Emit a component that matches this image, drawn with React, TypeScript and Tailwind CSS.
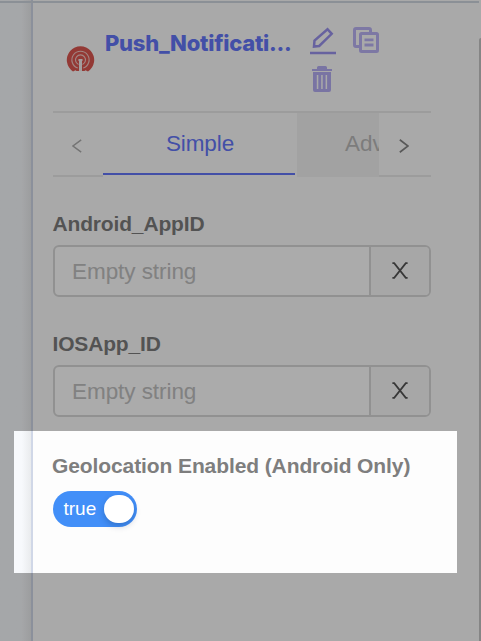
import React from "react";

function StringField({ label }: { label: string }) {
  return (
    <section className="h-[120px]">
      <h2 className="-ml-[0.5px] h-[33px] text-[21px] leading-[24px] font-bold tracking-[-0.16px] text-[#7d7d7d] whitespace-nowrap">{label}</h2>
      <div className="flex h-[52px] w-[378px] rounded-[6px] border-2 border-[#d8d8d8] bg-white">
        <div className="flex w-[314px] items-center pt-[2px] pl-[17px] text-[22.5px] tracking-[-0.06px] text-[#c0c0c0]">Empty string</div>
        <button className="flex flex-1 items-center justify-center rounded-r-[4px] border-l-2 border-[#d8d8d8] bg-[#fafafa]" aria-label="Clear">
          <svg width="16" height="17" viewBox="0 0 16 17" className="-mt-px" fill="none" stroke="#545454" strokeWidth="1.8">
            <path d="M.4 1.2H2.2L13.8 15.8h1.8M15.6 1.2H13.8L2.2 15.8H.4" />
          </svg>
        </button>
      </div>
    </section>
  );
}

export default function App() {
  return (
    <main className="relative flex h-[641px] w-[481px] overflow-hidden bg-[#fdfdfd] font-['Liberation_Sans',Arial,sans-serif]">
      <aside className="w-[31px] shrink-0 bg-linear-to-r from-[#f7f9fc] from-70% to-[#e9ebed]" />
      <div className="w-[2px] shrink-0 bg-[#d0d7e7]" />
      <div className="flex-1 pl-[20px]">
        <header className="flex h-[111px] pt-[25px]">
          <svg className="mt-[21px] ml-[13px] shrink-0" width="29" height="29" viewBox="0 0 29 29" fill="none">
            <path d="M7 25.4A13.7 13.7 0 1 1 22 25.4L19.5 24.2l-1 .8h-8l-1-.8Z" fill="#dc564f" />
            <g stroke="#f0c8c5" strokeWidth="1.1">
              <path d="M11.8 22A8.6 8.6 0 1 1 17.2 22" />
              <path d="M12.5 18.5A5 5 0 1 1 16.5 18.5" />
            </g>
            <path d="M12.5 13h4v2h-.5v10h-3v-10h-.5Z" fill="#f4eeee" />
          </svg>
          <h1 className="ml-[10px] w-[188px] shrink-0 whitespace-nowrap pt-[4px] font-[Inter,sans-serif] text-[22px] leading-[28px] font-extrabold tracking-[-0.25px] text-[#6477fa]">Push_Notificati...</h1>
          <div className="ml-[16px] grid h-[72px] grid-cols-[43px_28px] grid-rows-[39px_33px]">
            <svg width="27" height="30" viewBox="0 0 27 30" fill="none" stroke="#9a92ed" strokeWidth="2.5">
              <path d="m5 21.5.5-6L18.5 4.2l4.2 4.6L10.2 21Z" />
              <path d="M1 28h26" stroke="#9a92ed" />
            </svg>
            <svg width="28" height="30" viewBox="0 0 28 30" fill="none" stroke="#bbb4f5" strokeWidth="3">
              <path d="M7 21.5H4Q2.5 21.5 2.5 20V5Q2.5 3.5 4 3.5h13Q18.5 3.5 18.5 5v3" />
              <rect x="8.5" y="8.5" width="17" height="18" rx="1" />
              <path d="M12.5 14.8h9M12.5 20h9" strokeWidth="2.8" />
            </svg>
            <svg className="-ml-px" width="27" height="31" viewBox="0 0 27 31" fill="#b5aef3">
              <path d="M4 5H9V3.5Q9 2 10.5 2h7Q19 2 19 3.5V5h5v2H4Z" />
              <path fillRule="evenodd" d="M5 8h18v18q0 2-2 2H7q-2 0-2-2ZM8.8 11v14h1.5V11Zm4.4 0v14h1.5V11Zm4.4 0v14h1.5V11Z" />
            </svg>
          </div>
        </header>

        <nav className="flex h-[66px] w-[378px] border-t-2 border-[#e9e9e9]">
          <button className="flex w-[50px] items-center justify-center border-b-2 border-[#e9e9e9]" aria-label="Previous">
            <svg width="10" height="14" viewBox="0 0 10 14" className="mt-[3px] mr-[2px]" fill="none" stroke="#adadad" strokeWidth="1.5"><path d="M9.2 .8 1 7l8.2 6.2" /></svg>
          </button>
          <div className="flex h-[62px] w-[192px] items-center justify-center border-b-2 border-[#6477fa] pt-[2px] pl-[2px] text-[22.5px] tracking-[-0.1px] text-[#6477fa]">Simple</div>
          <div className="ml-[2px] flex w-[82px] items-center overflow-hidden bg-[#f2f2f2] pb-[3px] pl-[48px] text-[22.5px] text-[#bababa]">Advanced</div>
          <button className="flex flex-1 items-center border-b-2 border-[#e9e9e9] pl-[20px]" aria-label="Next">
            <svg width="10" height="14" viewBox="0 0 10 14" className="mt-[3px]" fill="none" stroke="#858585" strokeWidth="1.7"><path d="m.8 .8 8.2 6.2-8.2 6.2" /></svg>
          </button>
        </nav>

        <div className="pt-[35px]">
          <StringField label="Android_AppID" />
          <StringField label="IOSApp_ID" />
          <section>
            <h2 className="-ml-px whitespace-nowrap pt-[2px] text-[21px] leading-[24px] font-bold tracking-[-0.1px] text-[#7e7e7e]">Geolocation Enabled (Android Only)</h2>
            <div className="mt-[13px] flex h-[36px] w-[84px] items-center justify-between rounded-full bg-[#428ff8] pr-[3px] pl-[10.5px] text-[19px] text-white">
              <span>true</span>
              <span className="h-[28px] w-[30px] rounded-full bg-white shadow-[0_3px_6px_rgba(0,35,80,0.25)]" />
            </div>
          </section>
        </div>
      </div>
      <div className="absolute top-[1px] left-0 h-[2px] w-[479px] bg-[#d0d7e0]" />
      <div className="absolute top-[38px] right-0 h-[603px] w-[2px] rounded-tl-sm bg-[#c6c6c6]" />
      <div className="pointer-events-none absolute top-[431px] left-[14px] h-[142px] w-[443px] shadow-[0_0_0_700px_rgba(0,0,0,0.33)]" />
    </main>
  );
}
